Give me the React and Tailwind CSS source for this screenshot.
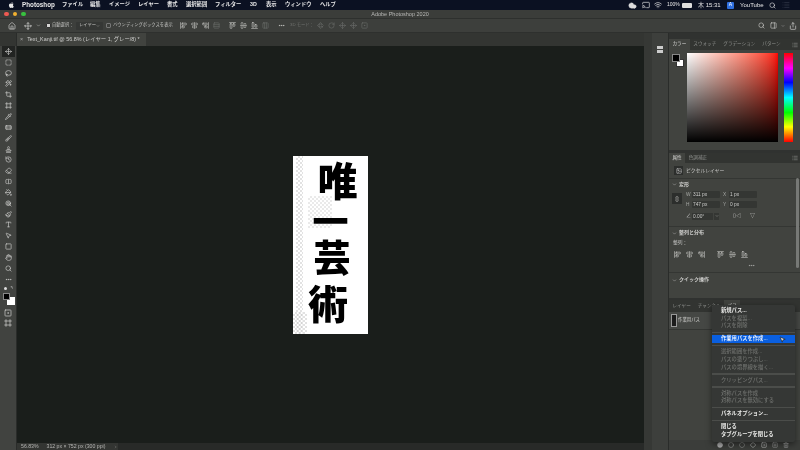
import React from 'react';
import {
  Move, SquareDashed, Lasso, MousePointer2, Crop, Frame, Pipette, Bandage, Brush, Stamp,
  Eraser, PaintBucket, Wand2, Type, Square, Hand, Search, Ellipsis, Home, ChevronDown, Lollipop,
  AlignStartVertical, AlignCenterVertical, AlignEndVertical, AlignStartHorizontal, SquareSplitHorizontal,
  AlignCenterHorizontal, AlignEndHorizontal, Rows3, Columns3, Rotate3d, RotateCw, Share, PanelRight,
  Wifi, Cast, Cloud, List, Link2, Image as ImageIcon, ChevronRight, Trash2, Circle, CircleDashed,
  Diamond, SquarePlus, History, SquareDot, Paintbrush,
} from 'lucide-react';

const MENUS = [
  ['ファイル', 'w-[20px]'], ['編集', 'w-[11px]'], ['イメージ', 'w-[21px]'], ['レイヤー', 'w-[21px]'], ['書式', 'w-[11px]'],
  ['選択範囲', 'w-[21px]'], ['フィルター', 'w-[27px]'], ['3D', 'w-[8px]'], ['表示', 'w-[11px]'], ['ウィンドウ', 'w-[27px]'], ['ヘルプ', 'w-[17px]'],
];

const TOOLS = [
  Move, SquareDashed, Lasso, Wand2, Crop, Frame, Pipette, Bandage, Brush, Stamp, History, Eraser,
  SquareSplitHorizontal, PaintBucket, Lollipop, Paintbrush, Type, MousePointer2, Square, Hand, Search, Ellipsis,
];

const MENU_ITEMS = [
  { label: '新規パス...', on: true },
  { label: 'パスを複製...' },
  { label: 'パスを削除' },
  { sep: true },
  { label: '作業用パスを作成...', active: true },
  { sep: true },
  { label: '選択範囲を作成...' },
  { label: 'パスの塗りつぶし...' },
  { label: 'パスの境界線を描く...' },
  { sep: true },
  { label: 'クリッピングパス...' },
  { sep: true },
  { label: '対称パスを作成' },
  { label: '対称パスを無効にする' },
  { sep: true },
  { label: 'パネルオプション...', on: true },
  { sep: true },
  { label: '閉じる', on: true },
  { label: 'タブグループを閉じる', on: true },
];

const MenuBar = () => (
  <div className="h-[10px] shrink-0 flex items-center bg-[#0b1122] text-[#e8e8e8] text-[5.3px] font-bold">
    <svg width="7" height="8" viewBox="0 0 24 24" className="ml-[8px] fill-[#e8e8e8]">
      <path d="M17 12.6c0-2.6 2.1-3.8 2.2-3.9-1.2-1.8-3.1-2-3.7-2-1.6-.2-3.1.9-3.9.9s-2-.9-3.3-.9c-1.7 0-3.3 1-4.2 2.5-1.8 3.1-.5 7.7 1.3 10.2.9 1.2 1.9 2.6 3.2 2.6 1.3-.1 1.8-.8 3.4-.8s2 .8 3.4.8 2.3-1.3 3.1-2.5c1-1.4 1.4-2.8 1.4-2.9-.1 0-2.9-1.1-2.9-4zM14.4 4.8c.7-.9 1.2-2 1.1-3.2-1 0-2.2.7-2.9 1.5-.6.7-1.2 1.9-1 3.1 1.1.1 2.2-.6 2.8-1.4z" />
    </svg>
    <span className="ml-[7px] w-[31px] text-[6.3px]">Photoshop</span>
    <div className="ml-[9px] flex gap-[8px]">
      {MENUS.map(([m, w]) => (
        <span key={m} className={`${w} whitespace-nowrap`}>{m}</span>
      ))}
    </div>
    <div className="ml-auto flex items-center text-[6px] font-normal whitespace-nowrap">
      <Cloud size={9} fill="#ddd" strokeWidth={1} />
      <Cast size={8} className="ml-[5px]" />
      <Wifi size={8} className="ml-[4px]" />
      <span className="ml-[5px] w-[14px] text-[5px]">100%</span>
      <span className="ml-[1px] w-[10px] h-[5px] bg-[#ddd] rounded-[1px]" />
      <span className="ml-[6px] w-[22px] text-[6px]">木 15:31</span>
      <span className="ml-[7px] w-[7px] h-[7px] bg-[#2f6fe0] text-white text-[5px] flex items-center justify-center rounded-[1px]">A</span>
      <span className="ml-[6px] w-[23px] text-[6px]">YouTube</span>
      <Search size={7} className="ml-[6px]" />
      <List size={8} className="ml-[6px] mr-[10px] text-[#3a4050]" />
    </div>
  </div>
);

const TitleBar = () => (
  <div className="h-[9px] shrink-0 relative flex items-center bg-[#3b3d3a] border-b border-[#2e302e]">
    <div className="ml-[4px] flex gap-[4px]">
      <span className="w-[4.5px] h-[4.5px] rounded-full bg-[#ee5a52]" />
      <span className="w-[4.5px] h-[4.5px] rounded-full bg-[#f2b230]" />
      <span className="w-[4.5px] h-[4.5px] rounded-full bg-[#38c13f]" />
    </div>
    <span className="absolute inset-x-0 text-center text-[5.5px] text-[#b8b8b6]">Adobe Photoshop 2020</span>
  </div>
);

const OptIcon = ({ icon: Icon, dim, size = 7, className = '' }) => (
  <Icon size={size} strokeWidth={2} className={`shrink-0 ${dim ? 'text-[#6d6f6c]' : 'text-[#d5d5d3]'} ${className}`} />
);

const OptionsBar = () => (
  <div className="h-[14px] shrink-0 flex items-center bg-[#3d3f3c] text-[4.3px] text-[#c4c4c2] border-b border-[#2e302e] whitespace-nowrap">
    <OptIcon icon={Home} size={8} className="ml-[8px]" />
    <OptIcon icon={Move} size={8} className="ml-[8px]" />
    <OptIcon icon={ChevronDown} size={5} className="ml-[3.5px]" />
    <span className="ml-[5.5px] w-[5px] h-[5px] bg-[#d5d5d3] border border-[#333] rounded-[1px]" />
    <span className="ml-[1px] w-[24px]">自動選択：</span>
    <span className="w-[27px] h-[8px] bg-[#353735] rounded-[1px] flex items-center px-[3px] justify-between">レイヤー<ChevronDown size={4} /></span>
    <span className="ml-[3px] w-[5px] h-[5px] border border-[#777] rounded-[1px]" />
    <span className="ml-[2px] w-[59px]">バウンディングボックスを表示</span>
    <div className="ml-[7.5px] flex gap-[4px]">
      <OptIcon icon={AlignStartVertical} />
      <OptIcon icon={AlignCenterVertical} />
      <OptIcon icon={AlignEndVertical} />
      <OptIcon icon={Rows3} dim />
    </div>
    <div className="ml-[9px] flex gap-[4px]">
      <OptIcon icon={AlignStartHorizontal} />
      <OptIcon icon={AlignCenterHorizontal} />
      <OptIcon icon={AlignEndHorizontal} />
      <OptIcon icon={Columns3} dim />
    </div>
    <OptIcon icon={Ellipsis} className="ml-[9px]" />
    <span className="ml-[5.5px] w-[25px] text-[#70726f]">3D モード：</span>
    <div className="flex gap-[4px] ml-[1.5px]">
      <OptIcon icon={Rotate3d} dim />
      <OptIcon icon={RotateCw} dim />
      <OptIcon icon={Move} dim />
      <OptIcon icon={Move} dim />
      <OptIcon icon={SquareDot} dim />
    </div>
    <div className="ml-auto mr-[3px] flex items-center">
      <OptIcon icon={Search} />
      <OptIcon icon={PanelRight} className="ml-[5px]" />
      <OptIcon icon={ChevronDown} size={4} className="ml-[4.5px]" />
      <OptIcon icon={Share} size={8} className="ml-[4px]" />
    </div>
  </div>
);

const ToolBtn = ({ icon: Icon, active }) => (
  <div className={`h-[10.85px] w-[13px] shrink-0 flex items-center justify-center ${active ? 'bg-[#222422]' : ''}`}>
    <Icon size={7} strokeWidth={2.2} className="text-[#cfcfcd]" />
  </div>
);

const ToolBar = () => (
  <div className="w-[17px] shrink-0 bg-[#333532] flex flex-col border-r border-[#2a2c2a]">
    <div className="h-[13px] shrink-0" />
    <div className="flex-1 w-[16px] bg-[#414340] flex flex-col items-center">
      {TOOLS.map((Icon, i) => <ToolBtn key={i} icon={Icon} active={i === 0} />)}
      <div className="h-[7px] w-[11px] flex items-center justify-between px-[1px]">
        <span className="w-[3px] h-[3px] bg-[#ddd] rounded-full" />
        <span className="text-[4px] text-[#ccc] leading-none">↰</span>
      </div>
      <div className="mt-[1px] h-[14px] w-[13px] relative">
        <span className="absolute left-[5px] top-[4px] w-[8px] h-[8px] bg-white" />
        <span className="absolute left-[1px] top-0 w-[7px] h-[7px] bg-black border border-[#888]" />
      </div>
      <div className="mt-[2px] flex flex-col items-center gap-[2px]">
        <OptIcon icon={SquareDot} size={8} />
        <OptIcon icon={Frame} size={8} />
      </div>
    </div>
  </div>
);

const KanjiImage = () => (
  <div className="relative w-[75px] h-[178px] bg-white flex flex-col items-center pt-[5px] font-['Noto_Sans_CJK_JP',sans-serif] font-black text-black leading-[40px]">
    <div className="absolute left-[3px] top-0 w-[7px] h-full opacity-50 bg-[repeating-conic-gradient(#c4c4c4_0_25%,#ffffff_0_50%)] bg-[length:4px_4px]" />
    <div className="absolute left-[15px] top-[40px] w-[24px] h-[32px] opacity-30 bg-[repeating-conic-gradient(#b8b8b8_0_25%,#ffffff_0_50%)] bg-[length:4px_4px]" />
    <div className="absolute left-0 bottom-0 w-[14px] h-[22px] opacity-50 bg-[repeating-conic-gradient(#c4c4c4_0_25%,#ffffff_0_50%)] bg-[length:4px_4px]" />
    <span className="relative [writing-mode:vertical-rl] text-[40px] ml-[14px]">唯</span>
    <span className="relative [writing-mode:vertical-rl] text-[36px] mt-[2px]">一</span>
    <span className="relative [writing-mode:vertical-rl] text-[37px] ml-[3px]">芸</span>
    <span className="relative [writing-mode:vertical-rl] text-[40px] mt-[8px] -ml-[5px]">術</span>
  </div>
);

const CenterArea = () => (
  <div className="flex-1 min-w-0 flex flex-col">
    <div className="h-[13px] shrink-0 bg-[#333532] flex">
      <div className="w-[129px] bg-[#41433f] flex items-center text-[5.4px] text-[#cfcfcd] whitespace-nowrap">
        <span className="ml-[3px] mr-[4px] text-[#aaa]">×</span>Text_Kanji.tif @ 56.8% (レイヤー 1, グレー/8) *
      </div>
    </div>
    <div className="flex-1 bg-[#1a1e1b] flex items-center justify-center">
      <KanjiImage />
    </div>
    <div className="h-[7px] shrink-0 bg-[#282a28] flex">
      <div className="w-[101px] bg-[#333532] flex items-center text-[5.2px] text-[#b5b5b3] whitespace-nowrap">
        <span className="ml-[4px] w-[29px]">56.83%</span>
        <span>312 px × 752 px (300 ppi)</span>
        <ChevronRight size={4} className="ml-[9px]" />
      </div>
    </div>
  </div>
);

const Dock = () => (
  <>
    <div className="w-[8px] shrink-0 bg-[#363835]" />
    <div className="w-[16px] shrink-0 bg-[#3d3f3c] flex flex-col items-center pt-[13px]">
      <div className="w-[8px] h-[9px] flex flex-col gap-[1px] items-center">
        <span className="w-[6px] h-[3px] bg-[#ccc]" />
        <span className="w-[6px] h-[3px] bg-[#ccc]" />
      </div>
    </div>
  </>
);

const PanelTabs = ({ tabs, active, right = true, h = 'h-[11px]' }) => (
  <div className={`${h} shrink-0 flex items-stretch bg-[#323431] text-[4.6px] text-[#8f918e]`}>
    {tabs.map((t, i) => (
      <span key={t} className={`px-[3.5px] flex items-center whitespace-nowrap ${i === active ? 'bg-[#41433f] text-[#dcdcda]' : ''}`}>{t}</span>
    ))}
    {right && <List size={6} className="ml-auto mr-[2px] self-center text-[#9a9c99]" />}
  </div>
);

const ColorPanel = () => (
  <div className="h-[111px] shrink-0 flex flex-col">
    <PanelTabs tabs={['カラー', 'スウォッチ', 'グラデーション', 'パターン']} active={0} />
    <div className="flex-1 bg-[#41433f] flex pt-[3px] pl-[3px]">
      <div className="relative w-[15px] h-[16px]">
        <span className="absolute left-[4px] top-[6px] w-[8px] h-[8px] bg-white border border-[#333]" />
        <span className="absolute left-0 top-[1px] w-[8px] h-[8px] bg-black border border-[#888]" />
      </div>
      <div className="relative w-[91px] h-[89px] bg-gradient-to-r from-white to-[#ff0000]">
        <div className="absolute inset-0 bg-gradient-to-t from-black to-transparent" />
      </div>
      <div className="ml-[6px] w-[9px] h-[89px] bg-[linear-gradient(to_bottom,#ff0000,#ff00ff_17%,#0000ff_33%,#00ffff_50%,#00ff00_67%,#ffff00_83%,#ff0000)]" />
    </div>
  </div>
);

const SectionHead = ({ children }) => (
  <div className="h-[7px] flex items-center text-[5px] text-[#d0d0ce] font-bold">
    <ChevronDown size={5} className="mr-[2px] ml-[3px]" />{children}
  </div>
);

const NumField = ({ label, value }) => (
  <div className="flex items-center">
    <span className="w-[6px] text-[4.8px] text-[#a5a7a4]">{label}</span>
    <span className="w-[28px] h-[7px] bg-[#343633] rounded-[1px] pl-[1px] text-[4.8px] text-[#cfcfcd] flex items-center">{value}</span>
  </div>
);

const PropertiesPanel = () => (
  <div className="h-[145px] shrink-0 flex flex-col mt-[3px]">
    <PanelTabs tabs={['属性', '色調補正']} active={0} h="h-[10px]" />
    <div className="flex-1 bg-[#41433f] relative text-[#c8c8c6]">
      <div className="h-[16px] flex items-center border-b border-[#343633]">
        <span className="ml-[5px] w-[9px] h-[9px] bg-[#2c2e2c] flex items-center justify-center">
          <ImageIcon size={6} className="text-[#ccc]" />
        </span>
        <span className="ml-[3px] text-[4.8px]">ピクセルレイヤー</span>
      </div>
      <div className="h-[47.5px] border-b border-[#343633] pt-[2px]">
        <SectionHead>変形</SectionHead>
        <div className="flex mt-[3px]">
          <span className="ml-[3px] mt-[2px] w-[10px] h-[11px] bg-[#2c2e2c] flex items-center justify-center">
            <Link2 size={6} className="rotate-90" />
          </span>
          <div className="ml-[4px] flex flex-col gap-[3px]">
            <div className="flex gap-[3px]"><NumField label="W" value="311 px" /><NumField label="X" value="1 px" /></div>
            <div className="flex gap-[3px]"><NumField label="H" value="747 px" /><NumField label="Y" value="0 px" /></div>
            <div className="flex items-center mt-[1px]">
              <span className="text-[5px] w-[6px]">∠</span>
              <span className="w-[21px] h-[7px] bg-[#343633] text-[4.8px] pl-[1px] flex items-center">0.00°</span>
              <span className="ml-[1px] w-[5px] h-[7px] bg-[#343633] flex items-center justify-center"><ChevronDown size={4} /></span>
              <span className="ml-[14px] text-[5px]">▯◁</span>
              <span className="ml-[9px] text-[5px]">▽</span>
            </div>
          </div>
        </div>
      </div>
      <div className="h-[46.5px] border-b border-[#343633] pt-[3px]">
        <SectionHead>整列と分布</SectionHead>
        <div className="ml-[4px] mt-[2px] text-[4.8px]">整列：</div>
        <div className="ml-[4.5px] mt-[5px] flex">
          <OptIcon icon={AlignStartVertical} className="mr-[5px]" />
          <OptIcon icon={AlignCenterVertical} className="mr-[5px]" />
          <OptIcon icon={AlignEndVertical} className="mr-[12px]" />
          <OptIcon icon={AlignStartHorizontal} className="mr-[5px]" />
          <OptIcon icon={AlignCenterHorizontal} className="mr-[5px]" />
          <OptIcon icon={AlignEndHorizontal} />
        </div>
        <Ellipsis size={7} className="ml-[79px] mt-[4px] text-[#b5b5b3]" />
      </div>
      <div className="pt-[3.5px]">
        <SectionHead>クイック操作</SectionHead>
      </div>
      <div className="absolute right-[1px] top-[15px] w-[3px] h-[90px] rounded-full bg-[#777976]" />
    </div>
  </div>
);

const LayersPanel = () => (
  <div className="flex-1 min-h-0 flex flex-col mt-[2px]">
    <PanelTabs tabs={['レイヤー', 'チャンネル', 'パス']} active={2} right={false} h="h-[12px]" />
    <div className="flex-1 bg-[#41433f] flex flex-col">
      <div className="h-[18px] flex items-center border-b border-[#343633] bg-[#454744]">
        <span className="ml-[2px] w-[6px] h-[13px] bg-[#1c1c1c] border border-[#999]" />
        <span className="ml-[1px] text-[4.4px] text-[#d0d0ce] whitespace-nowrap">作業用パス</span>
      </div>
      <div className="flex-1" />
      <div className="h-[10px] shrink-0 bg-[#3b3d3a] flex items-center justify-end gap-[5px] pr-[11px] text-[#aaa]">
        <Circle size={6} fill="#aaa" />
        <Circle size={6} />
        <CircleDashed size={6} />
        <Diamond size={6} className="text-[#ddd]" />
        <SquareDot size={6} className="text-[#ddd]" />
        <SquarePlus size={6} />
        <Trash2 size={6} />
      </div>
    </div>
  </div>
);

const RightPanels = () => (
  <div className="w-[132px] shrink-0 flex flex-col bg-[#303230] pt-[6px] border-l border-[#2a2c2a]">
    <ColorPanel />
    <PropertiesPanel />
    <LayersPanel />
  </div>
);

const ContextMenu = () => (
  <div className="absolute left-[712px] top-[305px] w-[83px] h-[137px] rounded-[2px] bg-[#353735] pt-[2px] shadow-[0_2px_6px_rgba(0,0,0,0.5)] text-[5.3px] font-medium">
    {MENU_ITEMS.map((it, i) =>
      it.sep ? (
        <div key={i} className="h-[1.5px] my-[1.9px] bg-[#4b4d4a]" />
      ) : (
        <div
          key={i}
          className={`h-[7.7px] pl-[9px] flex items-center whitespace-nowrap ${it.active ? 'bg-[#0a5fe0] text-white' : it.on ? 'text-[#ececea] font-bold' : 'text-[#6f716e]'}`}
        >
          {it.label}
        </div>
      ),
    )}
    <MousePointer2 size={7} fill="#ddd" className="absolute left-[67px] top-[31px] text-[#111]" />
  </div>
);

export default function App() {
  return (
    <div className="relative w-[800px] h-[450px] overflow-hidden flex flex-col bg-[#333532] blur-[0.35px] font-['Liberation_Sans','Noto_Sans_CJK_JP',sans-serif]">
      <MenuBar />
      <TitleBar />
      <OptionsBar />
      <div className="flex-1 min-h-0 flex">
        <ToolBar />
        <CenterArea />
        <Dock />
        <RightPanels />
      </div>
      <ContextMenu />
    </div>
  );
}
